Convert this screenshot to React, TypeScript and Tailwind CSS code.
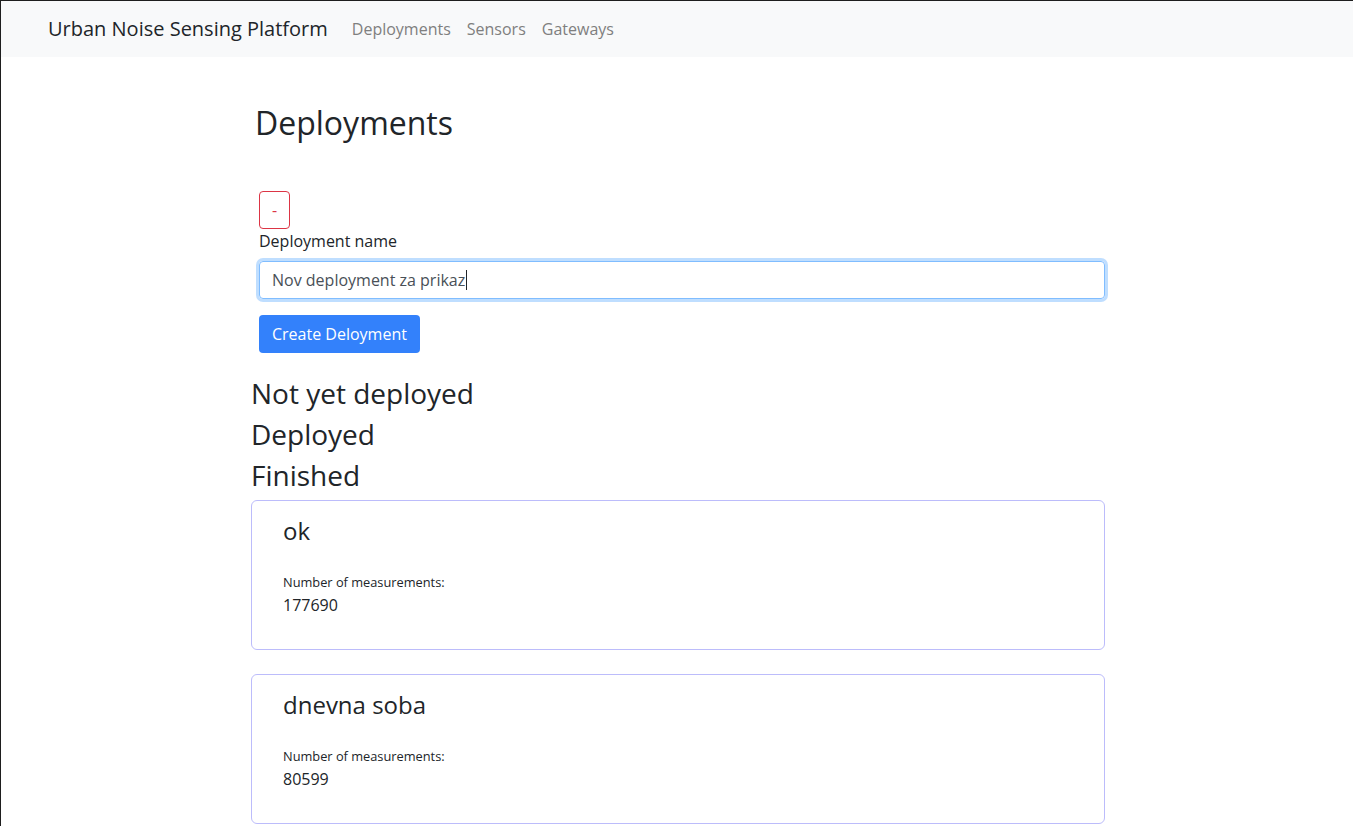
import React from "react";

const font = { fontFamily: '"Open Sans", "Noto Sans", sans-serif' };

function Card({ name, count }: { name: string; count: string }) {
  return (
    <div className="h-[150px] rounded-[6px] border border-[#bcbcfb] px-[31px] pt-[16px]">
      <h4 className="text-[24px] leading-[28.8px] text-[#212529]">{name}</h4>
      <div className="mt-[27px] text-[12.8px] leading-[19.2px] text-[#212529]">Number of measurements:</div>
      <div className="mt-[1px] text-[16px] leading-[24px] text-[#212529]">{count}</div>
    </div>
  );
}

export default function App() {
  return (
    <div className="min-h-[826px] border-l border-t border-[#1e1e1e] bg-white" style={font}>
      <nav className="flex h-[56px] items-center bg-[#f8f9fa] pl-[47px]">
        <span className="mr-[16px] text-[20px] leading-[30px] text-[#212529]">Urban Noise Sensing Platform</span>
        <div className="flex">
          <a className="px-[8px] text-[16px] leading-[24px] text-[#7f7f7f]">Deployments</a>
          <a className="px-[8px] text-[16px] leading-[24px] text-[#7f7f7f]">Sensors</a>
          <a className="px-[8px] text-[16px] leading-[24px] text-[#7f7f7f]">Gateways</a>
        </div>
      </nav>
      <main className="ml-[250px] w-[854px] pt-[47px]">
        <h2 className="pl-[4px] text-[32px] leading-[38.4px] text-[#212529]">Deployments</h2>
        <div className="mt-[49px] pl-[8px]">
          <button className="block h-[38px] w-[31px] rounded-[4px] border border-[#dc3545] text-[16px] leading-[24px] text-[#dc3545]">-</button>
          <label className="block text-[16px] leading-[24px] text-[#212529]">Deployment name</label>
          <div
            role="textbox"
            className="mt-[8px] flex h-[38px] items-center rounded-[4px] border border-[#80bdff] px-[12px] text-[16px] leading-[24px] text-[#495057] shadow-[0_0_0_3px_rgba(0,123,255,0.25)]"
          >
            <span>Nov deployment za prikaz</span>
            <span className="ml-[1px] inline-block h-[20px] w-px bg-[#212529]" />
          </div>
          <button className="mt-[16px] h-[38px] rounded-[4px] bg-[#3381fb] px-[13px] text-[16px] leading-[24px] text-white">
            Create Deloyment
          </button>
        </div>
        <div className="mt-[24px]">
          <h3 className="mb-[8px] text-[28px] leading-[33px] text-[#212529]">Not yet deployed</h3>
          <h3 className="mb-[8px] text-[28px] leading-[33px] text-[#212529]">Deployed</h3>
          <h3 className="mb-[8px] text-[28px] leading-[33px] text-[#212529]">Finished</h3>
        </div>
        <div className="flex flex-col gap-[24px]">
          <Card name="ok" count="177690" />
          <Card name="dnevna soba" count="80599" />
        </div>
      </main>
    </div>
  );
}
